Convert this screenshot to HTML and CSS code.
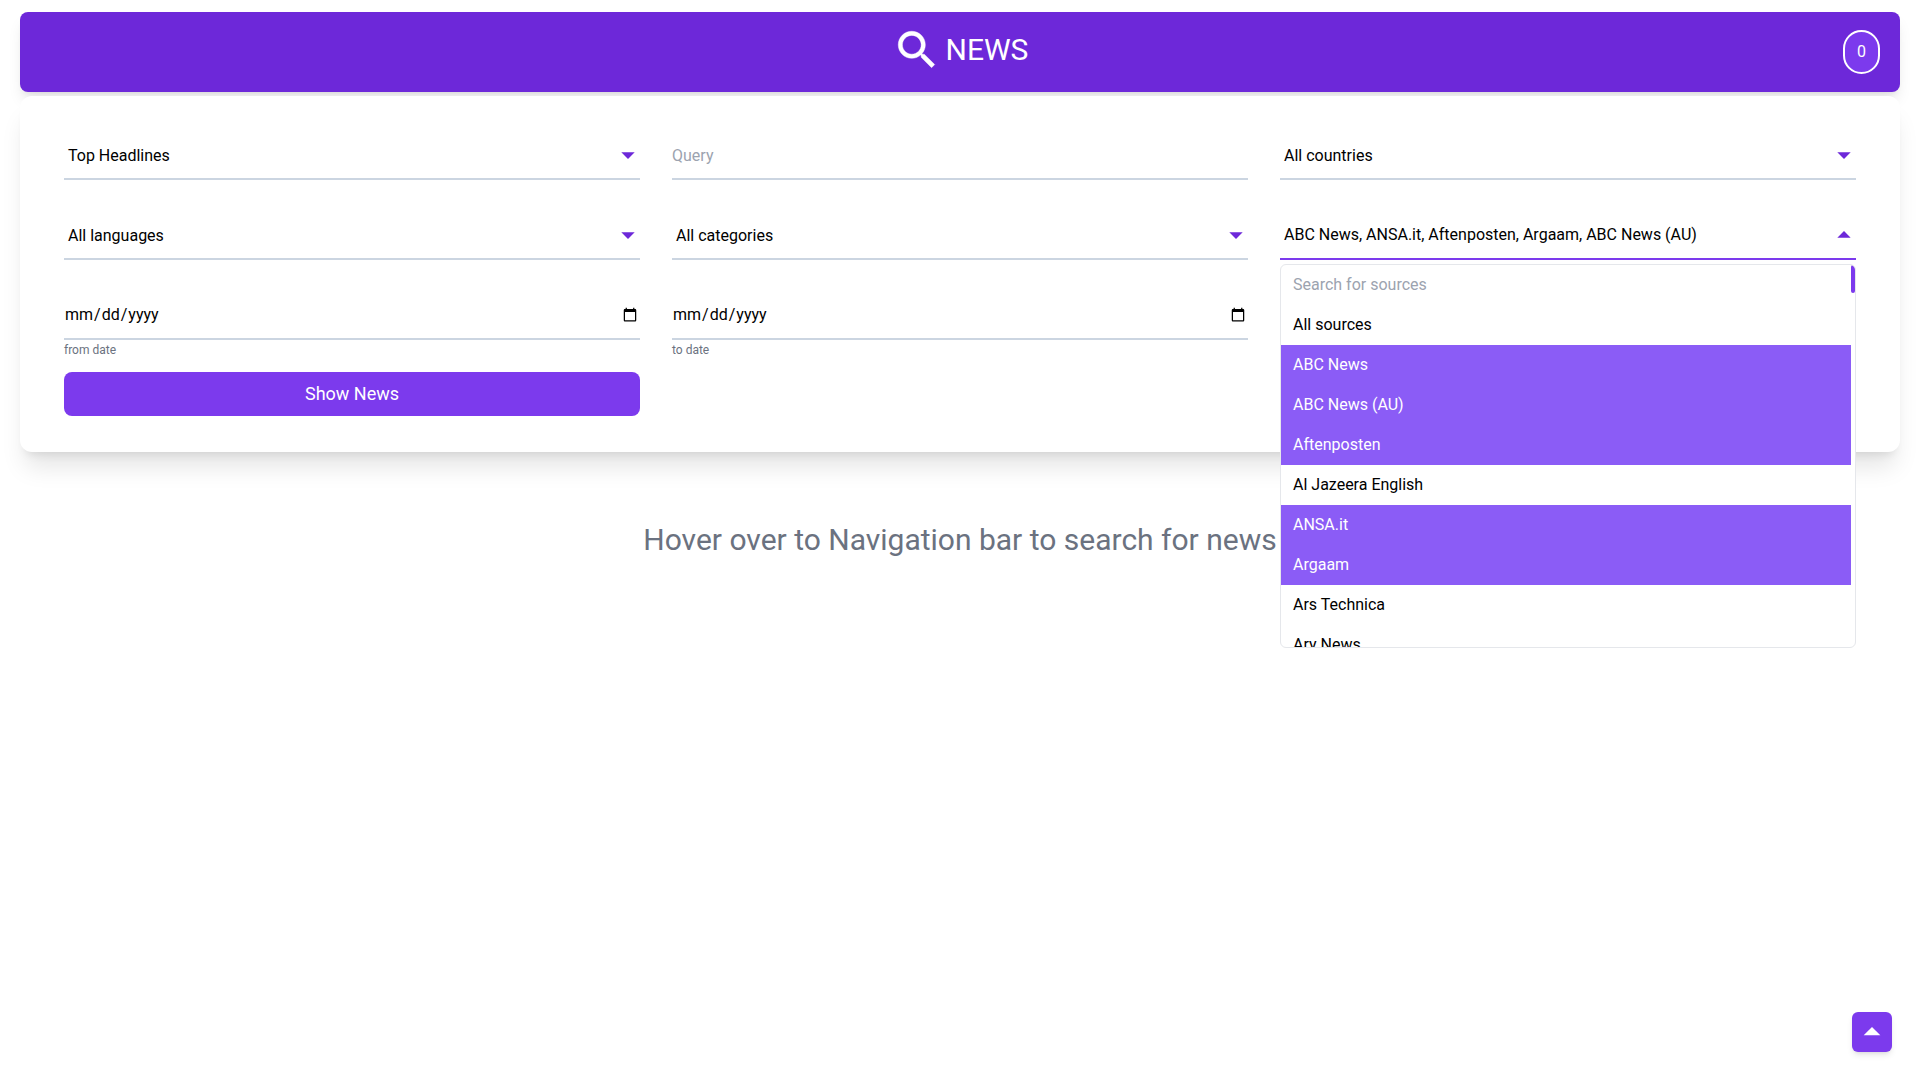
FILE: index.html
```html
<!DOCTYPE html>
<html lang="en">
<head>
<meta charset="utf-8">
<title>News</title>
<link rel="stylesheet" href="styles.css">
</head>
<body>
<svg class="sprite" aria-hidden="true">
  <symbol id="down" viewBox="0 0 24 24"><path d="m7 10 5 5 5-5z"/></symbol>
  <symbol id="up" viewBox="0 0 24 24"><path d="m7 14 5-5 5 5z"/></symbol>
</svg>
<header class="navbar">
  <div class="brand">
    <svg class="brand-icon" viewBox="0 0 24 24"><path d="M15.5 14h-.79l-.28-.27C15.41 12.59 16 11.11 16 9.5 16 5.91 13.09 3 9.5 3S3 5.91 3 9.5 5.91 16 9.5 16c1.61 0 3.09-.59 4.23-1.57l.27.28v.79l5 4.99L20.49 19l-4.99-5zm-6 0C7.01 14 5 11.99 5 9.5S7.01 5 9.5 5 14 7.01 14 9.5 11.99 14 9.5 14z"/></svg>
    <h1 class="brand-name">NEWS</h1>
  </div>
  <button class="counter">0</button>
</header>
<form class="panel">
  <div class="field"><span class="value">Top Headlines</span><svg class="arrow"><use href="#down"/></svg></div>
  <div class="field"><input class="input query" type="text" placeholder="Query"></div>
  <div class="field"><span class="value">All countries</span><svg class="arrow"><use href="#down"/></svg></div>
  <div class="field"><span class="value">All languages</span><svg class="arrow"><use href="#down"/></svg></div>
  <div class="field"><span class="value">All categories</span><svg class="arrow"><use href="#down"/></svg></div>
  <div class="field open"><span class="value">ABC News, ANSA.it, Aftenposten, Argaam, ABC News (AU)</span><svg class="arrow"><use href="#up"/></svg>
    <div class="menu">
      <input class="option search" type="text" placeholder="Search for sources">
      <div class="option">All sources</div>
      <div class="option selected">ABC News</div>
      <div class="option selected">ABC News (AU)</div>
      <div class="option selected">Aftenposten</div>
      <div class="option">Al Jazeera English</div>
      <div class="option selected">ANSA.it</div>
      <div class="option selected">Argaam</div>
      <div class="option">Ars Technica</div>
      <div class="option">Ary News</div>
      <div class="thumb"></div>
    </div>
  </div>
  <label class="date"><span class="field"><input class="input" type="date"></span><span class="hint">from date</span></label>
  <label class="date"><span class="field"><input class="input" type="date"></span><span class="hint">to date</span></label>
  <button class="submit" type="button">Show News</button>
</form>
<p class="message">Hover over to Navigation bar to search for news</p>
<button class="to-top"><svg class="to-top-icon"><use href="#up"/></svg></button>
</body>
</html>
```
FILE: styles.css
```css
* { box-sizing: border-box; }
body {
  margin: 0;
  min-height: 100vh;
  padding: 12px 20px 0;
  font: 16px/24px Roboto, sans-serif;
  color: #000;
  background: #fff;
}
button, input { font: inherit; border: 0; padding: 0; margin: 0; outline: 0; }
svg { display: block; fill: currentColor; }
.sprite { display: none; }

.navbar {
  display: grid;
  grid-template-columns: 1fr auto 1fr;
  height: 80px;
  padding: 0 20px;
  align-items: center;
  border-radius: 8px;
  color: #fff;
  background: #6d28d9;
  box-shadow: 0 10px 15px -3px rgba(0, 0, 0, .1), 0 4px 6px -4px rgba(0, 0, 0, .1);
}
.brand { grid-column: 2; display: flex; align-items: center; gap: 4px; padding-bottom: 4px; }
.brand-icon { width: 50px; height: 50px; stroke: currentColor; stroke-width: .2; }
.brand-name { margin: 0; font-size: 30px; line-height: 36px; font-weight: 400; }
.counter {
  justify-self: end;
  width: 37px;
  height: 44px;
  border: 2px solid #fff;
  border-radius: 9999px;
  color: #fff;
  background: #7c3aed;
}

.panel {
  display: grid;
  grid-template-columns: repeat(3, 1fr);
  grid-template-rows: 48px 48px 68px 44px;
  column-gap: 32px;
  row-gap: 32px;
  height: 356px;
  margin-top: 4px;
  padding: 36px 44px;
  border-radius: 12px;
  background: #fff;
  box-shadow: 0 20px 25px -5px rgba(0, 0, 0, .1), 0 8px 10px -6px rgba(0, 0, 0, .1);
  position: relative;
}
.field {
  display: flex;
  align-items: center;
  justify-content: space-between;
  height: 48px;
  border-bottom: 2px solid #cbd5e1;
  position: relative;
}
.value { padding: 1px 0 0 4px; }
.arrow { width: 32px; height: 32px; margin-right: -4px; color: #6d28d9; }
.input { width: 100%; height: 24px; background: transparent; }
.query { height: 25px; padding-top: 1px; }
.input::placeholder, .search::placeholder { color: #9ca3af; opacity: 1; }
.date { display: block; }
.hint { display: block; font-size: 12px; line-height: 16px; margin-top: 2px; color: #6b7280; }
.submit {
  grid-column: 1;
  grid-row: 4;
  margin-top: -20px;
  height: 44px;
  border-radius: 8px;
  font-size: 18px;
  color: #fff;
  background: #7c3aed;
}

.open { border-color: #7c3aed; }
.open .value { padding: 0 0 1px 4px; }
.menu {
  position: absolute;
  z-index: 2;
  top: 52px;
  left: 0;
  width: 100%;
  height: 384px;
  padding-right: 4px;
  overflow: hidden;
  border: 1px solid #e5e7eb;
  border-radius: 6px;
  background: #fff;
}
.option { display: block; width: 100%; height: 40px; padding: 8px 12px; }
.search { padding: 7px 12px 9px; background: transparent; }
.selected { color: #fff; background: #8b5cf6; }
.thumb {
  position: absolute;
  top: 0;
  right: 0;
  width: 4px;
  height: 28px;
  border-radius: 2px;
  background: #7c3aed;
}

.message { margin: 70px 0 0; text-align: center; font-size: 30px; line-height: 36px; color: #6b7280; }
.to-top {
  position: fixed;
  right: 28px;
  bottom: 28px;
  width: 40px;
  height: 40px;
  border-radius: 6px;
  color: #fff;
  background: #7c3aed;
  box-shadow: 0 4px 6px -1px rgba(0, 0, 0, .1), 0 2px 4px -2px rgba(0, 0, 0, .1);
}
.to-top-icon { width: 40px; height: 40px; }
```
